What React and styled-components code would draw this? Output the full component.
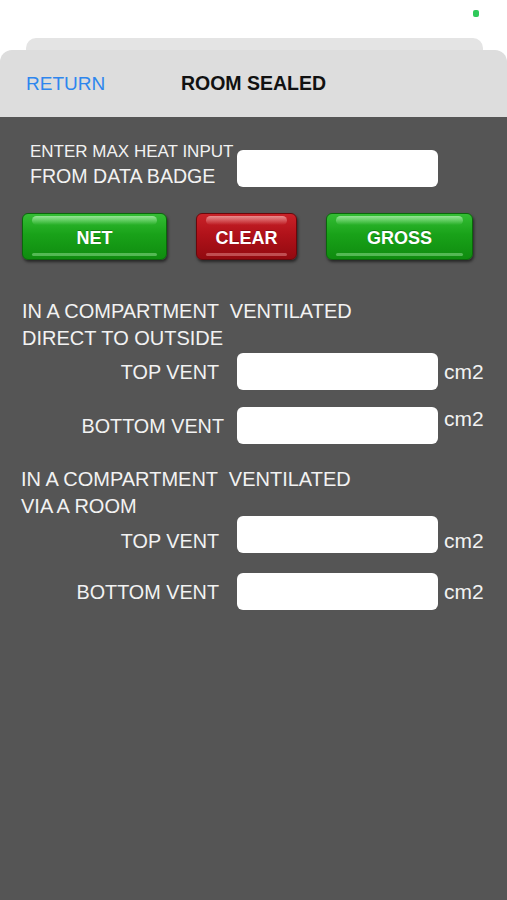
import React from 'react'
import styled, { createGlobalStyle, css } from 'styled-components'

const GlobalStyle = createGlobalStyle`
  html, body {
    margin: 0;
    padding: 0;
    background: #ffffff;
    font-family: 'Liberation Sans', Arial, sans-serif;
  }
  * {
    box-sizing: border-box;
  }
`

const Page = styled.div`
  display: flex;
  flex-direction: column;
  min-height: 900px;
`

const StatusBar = styled.div`
  height: 38px;
  display: flex;
  justify-content: flex-end;
  align-items: flex-start;
  padding: 10px 28px 0 0;
`

const StatusDot = styled.span`
  width: 6px;
  height: 7px;
  border-radius: 2px;
  background: #2fc95a;
`

const BackSheet = styled.div`
  height: 12px;
  margin: 0 24px 0 26px;
  background: #e4e4e4;
  border-radius: 10px 10px 0 0;
`

const Header = styled.header`
  height: 67px;
  display: grid;
  grid-template-columns: 1fr auto 1fr;
  align-items: center;
  padding: 0 26px;
  background: #dddddd;
  border-radius: 12px 12px 0 0;
`

const ReturnLink = styled.a`
  color: #2e86ee;
  font-size: 19px;
  cursor: pointer;
`

const Title = styled.h1`
  margin: 0;
  font-size: 19.5px;
  font-weight: 700;
  color: #111111;
`

const Content = styled.main`
  flex: 1;
  background: #555555;
  padding-top: 24px;
  color: #f2f2f2;
`

const Row = styled.div`
  display: grid;
  grid-template-columns: 237px 201px auto;
  align-items: center;
  margin-top: ${({ $top }) => $top || 0}px;
`

const BadgeLabel = styled.div`
  padding-left: 30px;
  align-self: start;
`

const BadgeLine = styled.div`
  font-size: ${({ $size }) => $size}px;
  line-height: ${({ $lh }) => $lh}px;
  white-space: nowrap;
`

const Field = styled.input`
  width: 201px;
  height: 37px;
  border: none;
  border-radius: 6px;
  background: #ffffff;
  outline: none;
  align-self: ${({ $align }) => $align || 'center'};
  margin-top: ${({ $mt }) => $mt || 0}px;
`

const VentLabel = styled.div`
  font-size: 19.8px;
  line-height: 24px;
  text-align: right;
  padding-right: ${({ $inset }) => $inset || 18}px;
  align-self: ${({ $align }) => $align || 'center'};
  white-space: nowrap;
`

const Unit = styled.span`
  font-size: 21px;
  line-height: 24px;
  padding-left: 6px;
  align-self: ${({ $align }) => $align || 'center'};
`

const ButtonRow = styled.div`
  display: grid;
  grid-template-columns: 145px 101px 147px;
  column-gap: 29px;
  padding-left: 22px;
  margin-top: 24px;
`

const glossy = {
  green: { top: '#34bd34', mid: '#19a219', bottom: '#0f8c0f', edge: '#0b660b', shine: '#a6eca6' },
  red: { top: '#c92228', mid: '#b1121a', bottom: '#920a10', edge: '#6a070b', shine: '#f0a0a0' },
}

const GlossButton = styled.button`
  position: relative;
  height: 47px;
  padding: 3px 0 0;
  border-radius: 6px;
  font-family: 'Liberation Sans', Arial, sans-serif;
  font-size: 18px;
  font-weight: 700;
  color: #ffffff;
  text-shadow: 0 -1px 0 rgba(0, 0, 0, 0.25);
  cursor: pointer;
  box-shadow: 1px 2px 3px rgba(0, 0, 0, 0.55);

  ${({ $tone }) => {
    const c = glossy[$tone]
    return css`
      border: 1px solid ${c.edge};
      background: linear-gradient(${c.top} 0%, ${c.mid} 45%, ${c.bottom} 100%);

      &::before,
      &::after {
        content: '';
        position: absolute;
        left: 9px;
        right: 9px;
        border-radius: 5px;
      }
      &::before {
        top: 2px;
        height: 9px;
        background: linear-gradient(${c.shine}, transparent);
        opacity: 0.85;
      }
      &::after {
        bottom: 3px;
        height: 3px;
        background: ${c.shine};
        opacity: 0.45;
      }
    `
  }}
`

const SectionHeading = styled.div`
  font-size: 20px;
  line-height: 27px;
  white-space: pre;
  padding-left: ${({ $inset }) => $inset}px;
  margin-top: ${({ $top }) => $top}px;
`

const VentRow = ({ label, top, fieldTop, labelAlign, unitAlign, inset }) => (
  <Row $top={top}>
    <VentLabel $align={labelAlign} $inset={inset}>
      {label}
    </VentLabel>
    <Field $mt={fieldTop} />
    <Unit $align={unitAlign}>cm2</Unit>
  </Row>
)

const App = () => {
  return (
    <>
      <GlobalStyle />
      <Page>
        <StatusBar>
          <StatusDot />
        </StatusBar>
        <BackSheet />
        <Header>
          <ReturnLink>RETURN</ReturnLink>
          <Title>ROOM SEALED</Title>
          <span />
        </Header>
        <Content>
          <Row>
            <BadgeLabel>
              <BadgeLine $size={17} $lh={22}>
                ENTER MAX HEAT INPUT
              </BadgeLine>
              <BadgeLine $size={19.6} $lh={26}>
                FROM DATA BADGE
              </BadgeLine>
            </BadgeLabel>
            <Field $align="start" $mt={9} />
          </Row>

          <ButtonRow>
            <GlossButton $tone="green">NET</GlossButton>
            <GlossButton $tone="red">CLEAR</GlossButton>
            <GlossButton $tone="green">GROSS</GlossButton>
          </ButtonRow>

          <SectionHeading $inset={22} $top={38}>
            {'IN A COMPARTMENT  VENTILATED\nDIRECT TO OUTSIDE'}
          </SectionHeading>
          <VentRow label="TOP VENT" top={1} />
          <VentRow label="BOTTOM VENT" top={17} inset={13} unitAlign="start" />

          <SectionHeading $inset={21} $top={22}>
            {'IN A COMPARTMENT  VENTILATED\nVIA A ROOM'}
          </SectionHeading>
          <VentRow label="TOP VENT" top={-4} labelAlign="end" unitAlign="end" />
          <VentRow label="BOTTOM VENT" top={20} />
        </Content>
      </Page>
    </>
  )
}

export default App
